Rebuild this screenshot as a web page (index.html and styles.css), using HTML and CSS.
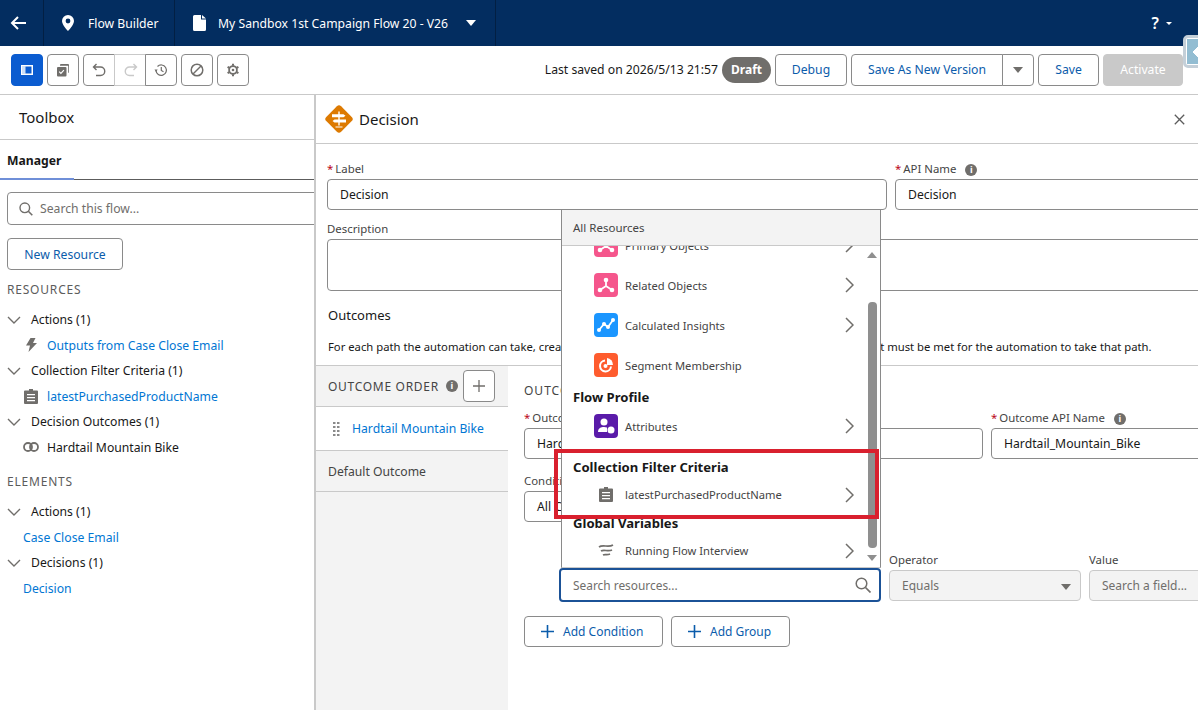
FILE: index.html
```html
<!DOCTYPE html>
<html lang="en">

<head>
    <meta charset="UTF-8">
    <title>Flow Builder</title>
    <link rel="stylesheet" href="styles.css">
</head>

<body>
    <!-- Top navy bar -->
    <header class="topbar">
        <div class="back">
            <svg width="18" height="16" viewBox="0 0 18 16"><path d="M8 2 2 8l6 6M2 8h14" fill="none" stroke="#fff" stroke-width="2"/></svg>
        </div>
        <div class="crumb crumbApp">
            <svg width="12" height="16" viewBox="0 0 12 16"><path fill-rule="evenodd" d="M6 0a6 6 0 0 0-6 6c0 4 6 10 6 10s6-6 6-10a6 6 0 0 0-6-6zm0 3.6a2.4 2.4 0 1 1 0 4.800a2.400 2.400 0 0 1 0-4.800z" fill="#fff"/></svg>
            <span>Flow Builder</span>
        </div>
        <div class="crumb crumbFlow">
            <svg width="13" height="16" viewBox="0 0 13 16"><path d="M1.500 0H8v4.500h5V14.500a1.500 1.500 0 0 1-1.500 1.500h-10A1.500 1.500 0 0 1 0 14.500v-13A1.500 1.500 0 0 1 1.500 0zM9 0l4 3.500H9z" fill="#fff"/></svg>
            <span>My Sandbox 1st Campaign Flow 20 - V26</span>
            <i class="caretWhite"></i>
        </div>
        <div class="help">?<i class="caretSmall"></i></div>
    </header>

    <!-- Toolbar -->
    <div class="toolbar">
        <button class="iconBtn active">
            <svg width="12" height="10" viewBox="0 0 12 10"><rect x=".75" y=".75" width="10.500" height="8.500" fill="none" stroke="#fff" stroke-width="1.500"/><rect x="1" y="1" width="3.500" height="8" fill="#cfe0f7"/></svg>
        </button>
        <button class="iconBtn">
            <svg width="14" height="14" viewBox="0 0 14 14"><path d="M4 1.800A1 1 0 0 1 5 1h7a1 1 0 0 1 1 1v7a1 1 0 0 1-.800 1V2.800H4z" fill="#706e6b"/><rect x="1" y="4" width="9.500" height="9.500" rx="1" fill="#706e6b"/><path d="m3.200 8.700 1.700 1.700 3-3.200" fill="none" stroke="#fff" stroke-width="1.200"/></svg>
        </button>
        <div class="btnGroup">
            <button class="iconBtn">
                <svg width="14" height="14" viewBox="0 0 14 14"><path d="M4.500 1 1.500 4l3 3M1.500 4h7a4 4 0 0 1 0 8.500H4" fill="none" stroke="#706e6b" stroke-width="1.400"/></svg>
            </button>
            <button class="iconBtn off">
                <svg width="14" height="14" viewBox="0 0 14 14"><path d="m9.500 1 3 3-3 3M12.500 4h-7a4 4 0 0 0 0 8.500H10" fill="none" stroke="#c9c9c9" stroke-width="1.400"/></svg>
            </button>
            <button class="iconBtn">
                <svg width="14" height="14" viewBox="0 0 14 14"><path d="M2 7.500a5.200 5.200 0 1 0 1.500-4" fill="none" stroke="#706e6b" stroke-width="1.200"/><path d="M.5 6.500h3.200L2 9z" fill="#706e6b"/><path d="M7.300 4v3.500l2.200 1.300" fill="none" stroke="#706e6b" stroke-width="1.200"/></svg>
            </button>
        </div>
        <button class="iconBtn">
            <svg width="14" height="14" viewBox="0 0 14 14"><circle cx="7" cy="7" r="5.800" fill="none" stroke="#706e6b" stroke-width="1.500"/><path d="M3 11 11 3" stroke="#706e6b" stroke-width="1.500"/></svg>
        </button>
        <button class="iconBtn">
            <svg width="14" height="14" viewBox="0 0 14 14"><circle cx="7" cy="7" r="3.900" fill="none" stroke="#706e6b" stroke-width="1.800"/><circle cx="7" cy="7" r="1.300" fill="#706e6b"/><path d="M7 .8v2M7 11.200v2M1.600 3.900l1.700 1M10.700 9.100l1.700 1M1.600 10.100l1.700-1M10.700 4.900l1.700-1" stroke="#706e6b" stroke-width="2"/></svg>
        </button>

        <div class="toolbarRight">
            <span class="savedText">Last saved on 2026/5/13 21:57</span>
            <span class="draft">Draft</span>
            <button class="btn btnDebug">Debug</button>
            <div class="splitBtn">
                <button class="btn btnVersion">Save As New Version</button>
                <button class="btn btnMore"><i class="caretGrey"></i></button>
            </div>
            <button class="btn btnSave">Save</button>
            <button class="btn btnActivate">Activate</button>
        </div>
    </div>

    <main class="workspace">
        <!-- Toolbox -->
        <aside class="toolbox">
            <h2 class="toolboxTitle">Toolbox</h2>
            <div class="tabs"><span class="tab">Manager</span></div>
            <div class="toolboxBody">
                <div class="searchFlow">
                    <svg width="14" height="14" viewBox="0 0 14 14"><circle cx="5.800" cy="5.800" r="4.800" fill="none" stroke="#706e6b" stroke-width="1.400"/><path d="m9.300 9.300 4 4" stroke="#706e6b" stroke-width="1.600"/></svg>
                    <span>Search this flow...</span>
                </div>
                <button class="btn btnNew">New Resource</button>

                <h3 class="sideHeading">RESOURCES</h3>
                <div class="treeHead"><svg class="chev" viewBox="0 0 14 8"><path d="m1 1 6 6 6-6" fill="none" stroke="#706e6b" stroke-width="1.400"/></svg>Actions (1)</div>
                <div class="treeItem link">
                    <svg width="12" height="14" viewBox="0 0 12 14"><path d="M5.500 0h5L8 5h4L3.500 14 5 7.500H1z" fill="#706e6b"/></svg>
                    <span>Outputs from Case Close Email</span>
                </div>
                <div class="treeHead"><svg class="chev" viewBox="0 0 14 8"><path d="m1 1 6 6 6-6" fill="none" stroke="#706e6b" stroke-width="1.400"/></svg>Collection Filter Criteria (1)</div>
                <div class="treeItem link">
                    <svg width="14" height="15" viewBox="0 0 14 15"><use href="#clipboard"/></svg>
                    <span>latestPurchasedProductName</span>
                </div>
                <div class="treeHead"><svg class="chev" viewBox="0 0 14 8"><path d="m1 1 6 6 6-6" fill="none" stroke="#706e6b" stroke-width="1.400"/></svg>Decision Outcomes (1)</div>
                <div class="treeItem">
                    <svg width="16" height="10" viewBox="0 0 16 10"><circle cx="5" cy="5" r="4" fill="none" stroke="#706e6b" stroke-width="1.800"/><circle cx="11" cy="5" r="4" fill="none" stroke="#706e6b" stroke-width="1.800"/></svg>
                    <span>Hardtail Mountain Bike</span>
                </div>

                <h3 class="sideHeading headingElements">ELEMENTS</h3>
                <div class="treeHead"><svg class="chev" viewBox="0 0 14 8"><path d="m1 1 6 6 6-6" fill="none" stroke="#706e6b" stroke-width="1.400"/></svg>Actions (1)</div>
                <div class="treeItem link plain">Case Close Email</div>
                <div class="treeHead"><svg class="chev" viewBox="0 0 14 8"><path d="m1 1 6 6 6-6" fill="none" stroke="#706e6b" stroke-width="1.400"/></svg>Decisions (1)</div>
                <div class="treeItem link plain">Decision</div>
            </div>
        </aside>

        <!-- Decision editor -->
        <section class="editor">
            <div class="editorHead">
                <svg width="30" height="30" viewBox="0 0 30 30"><rect x="4.500" y="4.500" width="21" height="21" rx="3" transform="rotate(45 15 15)" fill="#dd7a01"/><path d="M14.300 7.500h1.400v14h-1.400z" fill="#fff"/><path d="M8 10.200h11.500l2 1.500-2 1.500H8zM22 15.500H10.500l-2 1.500 2 1.500H22zM11.500 22.500h7V23.500h-7z" fill="#fff"/></svg>
                <h1>Decision</h1>
                <svg class="closeX" width="11" height="11" viewBox="0 0 11 11"><path d="m.8.800 9.400 9.400M10.200.8.800 10.200" stroke="#5c5c5c" stroke-width="1.300"/></svg>
            </div>

            <div class="nameRow">
                <div class="field">
                    <label><b>*</b>Label</label>
                    <div class="input">Decision</div>
                </div>
                <div class="field">
                    <label><b>*</b>API Name<i class="info">i</i></label>
                    <div class="input">Decision</div>
                </div>
            </div>
            <div class="field descField">
                <label>Description</label>
                <div class="input textarea"></div>
            </div>

            <h2 class="outcomesTitle">Outcomes</h2>
            <p class="outcomesHelp">For each path the automation can take, create an outcome. For each outcome, specify the conditions that must be met for the automation to take that path.</p>

            <div class="outcomes">
                <div class="outcomeList">
                    <div class="orderHead">
                        <span>OUTCOME ORDER</span><i class="info">i</i>
                        <button class="addOutcome"><svg width="14" height="14" viewBox="0 0 14 14"><path d="M7 1v12M1 7h12" stroke="#706e6b" stroke-width="1.300"/></svg></button>
                    </div>
                    <div class="orderItem current">
                        <svg width="7" height="14" viewBox="0 0 7 14" fill="#8a8a8a"><rect width="2.500" height="2"/><rect x="4" width="2.500" height="2"/><rect y="4" width="2.500" height="2"/><rect x="4" y="4" width="2.500" height="2"/><rect y="8" width="2.500" height="2"/><rect x="4" y="8" width="2.500" height="2"/><rect y="12" width="2.500" height="2"/><rect x="4" y="12" width="2.500" height="2"/></svg>
                        Hardtail Mountain Bike
                    </div>
                    <div class="orderItem">Default Outcome</div>
                </div>

                <div class="outcomeDetail">
                    <h3 class="detailTitle">OUTCOME DETAILS</h3>
                    <div class="detailRow">
                        <div class="field">
                            <label><b>*</b>Outcome Label</label>
                            <div class="input">Hardtail Mountain Bike</div>
                        </div>
                        <div class="field">
                            <label><b>*</b>Outcome API Name<i class="info">i</i></label>
                            <div class="input">Hardtail_Mountain_Bike</div>
                        </div>
                    </div>
                    <div class="field condField">
                        <label>Condition Requirements to Execute Outcome</label>
                        <div class="input">All Conditions Are Met (AND)</div>
                    </div>
                    <div class="condRow">
                        <div class="field">
                            <label></label>
                            <div class="input searchRes">
                                <span>Search resources...</span>
                                <svg width="16" height="16" viewBox="0 0 16 16"><circle cx="6.500" cy="6.500" r="5.300" fill="none" stroke="#706e6b" stroke-width="1.500"/><path d="m10.500 10.500 5 5" stroke="#706e6b" stroke-width="1.700"/></svg>
                            </div>
                        </div>
                        <div class="field">
                            <label>Operator</label>
                            <div class="input disabled">Equals<i class="caretGrey"></i></div>
                        </div>
                        <div class="field">
                            <label>Value</label>
                            <div class="input disabled">Search a field...</div>
                        </div>
                    </div>
                    <div class="addRow">
                        <button class="btn btnAdd btnCondition"><svg width="13" height="13" viewBox="0 0 13 13"><path d="M6.500 0v13M0 6.500h13" stroke="#0b5cab" stroke-width="1.600"/></svg>Add Condition</button>
                        <button class="btn btnAdd btnGroupAdd"><svg width="13" height="13" viewBox="0 0 13 13"><path d="M6.500 0v13M0 6.500h13" stroke="#0b5cab" stroke-width="1.600"/></svg>Add Group</button>
                    </div>
                </div>
            </div>
        </section>
    </main>

    <!-- Resource picker, open over the form -->
    <div class="picker">
        <div class="pickerHead">All Resources</div>
        <div class="pickerBody">
            <div class="pickerList">
                <div class="pickRow">
                    <span class="tile pink"><svg viewBox="0 0 24 24"><use href="#objects"/></svg></span>Primary Objects<svg class="arrow" viewBox="0 0 9 16"><use href="#arrow"/></svg>
                </div>
                <div class="pickRow">
                    <span class="tile pink"><svg viewBox="0 0 24 24"><use href="#objects"/></svg></span>Related Objects<svg class="arrow" viewBox="0 0 9 16"><use href="#arrow"/></svg>
                </div>
                <div class="pickRow">
                    <span class="tile blue"><svg viewBox="0 0 24 24"><path d="M5 17l5-6 4 3 5-7" fill="none" stroke="#fff" stroke-width="1.800"/><circle cx="5" cy="17" r="2" fill="#fff"/><circle cx="10" cy="11" r="2" fill="#fff"/><circle cx="14" cy="14" r="2" fill="#fff"/><circle cx="19" cy="7" r="2" fill="#fff"/></svg></span>Calculated Insights<svg class="arrow" viewBox="0 0 9 16"><use href="#arrow"/></svg>
                </div>
                <div class="pickRow">
                    <span class="tile orange"><svg viewBox="0 0 24 24"><path d="M11 7.500a5.500 5.500 0 1 0 6 6" fill="none" stroke="#fff" stroke-width="2"/><path d="M13 5a7 7 0 0 1 6 7h-6z" fill="#fff"/><circle cx="11.500" cy="13" r="2" fill="#fff"/></svg></span>Segment Membership
                </div>
                <h4 class="pickGroup groupProfile">Flow Profile</h4>
                <div class="pickRow">
                    <span class="tile purple"><svg viewBox="0 0 24 24"><circle cx="10" cy="8" r="3.500" fill="#fff"/><path d="M4 18c0-4 3-5 6-5 1 0 2 .2 3 .6V18z" fill="#fff"/><circle cx="17" cy="16" r="3.500" fill="#fff"/></svg></span>Attributes<svg class="arrow" viewBox="0 0 9 16"><use href="#arrow"/></svg>
                </div>
                <h4 class="pickGroup groupFilter">Collection Filter Criteria</h4>
                <div class="pickRow tight">
                    <span class="tile bare"><svg width="14" height="15" viewBox="0 0 14 15"><use href="#clipboard"/></svg></span>latestPurchasedProductName<svg class="arrow" viewBox="0 0 9 16"><use href="#arrow"/></svg>
                </div>
                <h4 class="pickGroup groupGlobal">Global Variables</h4>
                <div class="pickRow tight">
                    <span class="tile bare"><svg width="16" height="14" viewBox="0 0 16 14"><path d="M1 3c4-3 9 1 14-2M3 7c3-2 7 1 11-1M5 11c2-1 4 .5 7-1" fill="none" stroke="#706e6b" stroke-width="1.700"/></svg></span>Running Flow Interview<svg class="arrow" viewBox="0 0 9 16"><use href="#arrow"/></svg>
                </div>
            </div>
            <div class="scrollbar">
                <i class="scrollUp"></i>
                <i class="scrollThumb"></i>
                <i class="scrollDown"></i>
            </div>
        </div>
    </div>

    <!-- Annotation and side handle on top of the capture -->
    <div class="redBox"></div>
    <div class="sideHandle"><i></i></div>

    <svg class="defs" width="0" height="0">
        <defs>
            <g id="clipboard">
                <path fill-rule="evenodd" d="M5 0h4v1.500H13a1 1 0 0 1 1 1V14a1 1 0 0 1-1 1H1a1 1 0 0 1-1-1V2.500a1 1 0 0 1 1-1h4zM3 5v1.300h8V5zm0 3v1.300h8V8zm0 3v1.300h8V11z" fill="#706e6b"/>
            </g>
            <g id="objects">
                <circle cx="12" cy="7" r="2.300" fill="#fff"/>
                <circle cx="6" cy="17" r="2.300" fill="#fff"/>
                <circle cx="18" cy="17" r="2.300" fill="#fff"/>
                <path d="M12 7v6l-6 4m6-4 6 4" fill="none" stroke="#fff" stroke-width="1.800"/>
            </g>
            <path id="arrow" d="m1 1 7 7-7 7" fill="none" stroke="#706e6b" stroke-width="1.500"/>
        </defs>
    </svg>
</body>

</html>
```

FILE: styles.css
```css
* {
    margin: 0;
    padding: 0;
    box-sizing: border-box;
}

html,
body {
    height: 100%;
    overflow: hidden;
}

body {
    position: relative;
    display: flex;
    flex-direction: column;
    background-color: #fff;
    color: #181818;
    font-family: "Noto Sans", "Open Sans", sans-serif;
    font-size: 12.2px;
}

button {
    font: inherit;
    background-color: #fff;
}

i {
    font-style: normal;
}

/* top bar */
.topbar {
    display: flex;
    align-items: center;
    flex: none;
    height: 46px;
    background-color: #032d60;
    color: #fff;
    font-size: 12.2px;
}

.back {
    display: flex;
    align-items: center;
    height: 100%;
    width: 44px;
    padding-left: 10px;
    border-right: 1px solid #021f43;
}

.crumb {
    display: flex;
    align-items: center;
    height: 100%;
    border-right: 1px solid #021f43;
}

.crumbApp {
    width: 131px;
    padding-left: 18px;
    gap: 14px;
}

.crumbFlow {
    width: 321px;
    padding-left: 18px;
    gap: 12px;
}

.caretWhite {
    width: 0;
    height: 0;
    margin-left: 6px;
    border: 5.5px solid transparent;
    border-top: 6px solid #fff;
    border-bottom: 0;
}

.help {
    display: flex;
    align-items: center;
    margin-left: auto;
    margin-right: 26px;
    font-size: 16px;
    font-weight: 600;
}

.caretSmall {
    width: 0;
    height: 0;
    margin-left: 7px;
    border: 3px solid transparent;
    border-top: 3px solid #fff;
    border-bottom: 0;
}

/* toolbar */
.toolbar {
    display: flex;
    align-items: center;
    flex: none;
    height: 49px;
    padding: 0 15px 1px 11px;
    gap: 4px;
    border-bottom: 1px solid #c9c9c9;
}

.iconBtn {
    display: flex;
    align-items: center;
    justify-content: center;
    width: 32px;
    height: 32px;
    border: 1px solid #8a8a8a;
    border-radius: 4px;
}

.iconBtn.active {
    background-color: #0b5cd0;
    border-color: #0b5cd0;
}

.btnGroup {
    display: flex;
}

.btnGroup .iconBtn {
    border-radius: 0;
    margin-left: -1px;
}

.btnGroup .iconBtn:first-child {
    margin-left: 0;
    border-radius: 4px 0 0 4px;
}

.btnGroup .iconBtn:last-child {
    border-radius: 0 4px 4px 0;
}

.btnGroup .iconBtn.off {
    border-top-color: #c9c9c9;
    border-bottom-color: #c9c9c9;
    border-left-color: #c9c9c9;
    border-right: 0;
}

.toolbarRight {
    display: flex;
    align-items: center;
    margin-left: auto;
    gap: 4px;
}

.draft {
    padding: 0 9px;
    height: 26px;
    line-height: 25px;
    background-color: #706e6b;
    border-radius: 13px;
    color: #fff;
    font-size: 12px;
    font-weight: 700;
}

.btn {
    height: 32px;
    border: 1px solid #8a8a8a;
    border-radius: 4px;
    color: #0b5cab;
    font-size: 12.2px;
}

.btnDebug {
    width: 72px;
}

.splitBtn {
    display: flex;
}

.btnVersion {
    width: 152px;
    border-radius: 4px 0 0 4px;
}

.btnMore {
    display: flex;
    align-items: center;
    justify-content: center;
    width: 32px;
    margin-left: -1px;
    border-radius: 0 4px 4px 0;
}

.caretGrey {
    width: 0;
    height: 0;
    border: 5px solid transparent;
    border-top: 6px solid #706e6b;
    border-bottom: 0;
}

.btnSave {
    width: 61px;
}

.btnActivate {
    width: 80px;
    background-color: #c9c9c9;
    border-color: #c9c9c9;
    color: #fff;
}

/* main area */
.workspace {
    display: flex;
    flex: 1;
    min-height: 0;
}

.toolbox {
    flex: none;
    width: 314px;
    overflow: hidden;
}

.toolboxTitle {
    height: 45px;
    padding: 12px 0 0 19px;
    border-bottom: 1px solid #c9c9c9;
    font-size: 15px;
    font-weight: 400;
}

.tabs {
    height: 40px;
    border-bottom: 1px solid #5c5c5c;
}

.tab {
    display: inline-block;
    width: 74px;
    height: 40px;
    padding: 12px 0 0 7px;
    border-bottom: 2px solid #6f8fd8;
    font-size: 12.2px;
    font-weight: 700;
}

.toolboxBody {
    padding: 12px 0 0 7px;
}

.searchFlow {
    display: flex;
    align-items: center;
    gap: 7px;
    width: 320px;
    height: 33px;
    padding-left: 11px;
    border: 1px solid #8a8a8a;
    border-radius: 4px;
    color: #706e6b;
}

.btnNew {
    display: block;
    width: 116px;
    margin-top: 13px;
}

.sideHeading {
    margin-top: 10px;
    height: 20px;
    line-height: 20px;
    color: #5c5c5c;
    font-size: 12px;
    font-weight: 400;
    letter-spacing: .8px;
}

.headingElements {
    margin-top: 12px;
}

.treeHead {
    display: flex;
    align-items: center;
    height: 25.5px;
    gap: 10px;
}

.sideHeading + .treeHead {
    margin-top: 7px;
}

.chev {
    width: 14px;
    height: 8px;
}

.treeItem {
    display: grid;
    grid-template-columns: 16px auto;
    align-items: center;
    height: 25.5px;
    gap: 8px;
    padding-left: 16px;
}

.treeItem svg {
    justify-self: center;
}

.treeItem.plain {
    display: flex;
}

.link {
    color: #0176d3;
}

/* decision editor */
.editor {
    flex: 1;
    min-width: 0;
    border-left: 2px solid #c9c9c9;
    overflow: hidden;
}

.editorHead {
    display: flex;
    align-items: center;
    height: 49px;
    padding: 0 13px 0 8px;
    gap: 5px;
    border-bottom: 1px solid #c9c9c9;
}

.editorHead h1 {
    font-size: 15px;
    font-weight: 400;
}

.closeX {
    margin-left: auto;
}

label {
    display: block;
    height: 20px;
    line-height: 20px;
    color: #444;
    font-size: 11.4px;
    white-space: nowrap;
}

label b {
    margin-right: 2px;
    color: #ba0517;
    font-weight: 400;
}

.input {
    height: 31px;
    line-height: 29px;
    padding-left: 12px;
    border: 1px solid #8a8a8a;
    border-radius: 4px;
    font-size: 12.2px;
    white-space: nowrap;
    overflow: hidden;
}

.nameRow {
    display: grid;
    grid-template-columns: 560px 320px;
    gap: 8px;
    padding: 15px 0 0 11px;
}

.descField {
    width: 890px;
    padding: 9px 0 0 11px;
}

.textarea {
    height: 52px;
}

.info {
    display: inline-block;
    width: 12px;
    height: 12px;
    margin-left: 9px;
    border-radius: 50%;
    background-color: #706e6b;
    color: #fff;
    font-size: 9px;
    font-weight: 700;
    line-height: 12px;
    text-align: center;
}

.outcomesTitle {
    height: 22px;
    margin: 13px 0 0 12px;
    font-size: 13px;
    font-weight: 400;
    line-height: 22px;
}

.outcomesHelp {
    height: 20px;
    margin: 11px 0 0 12px;
    font-size: 11.27px;
    line-height: 20px;
    white-space: nowrap;
}

.outcomes {
    display: flex;
    height: 345px;
    margin-top: 8px;
    border-top: 1px solid #c9c9c9;
}

.outcomeList {
    flex: none;
    width: 192px;
    background-color: #f3f3f3;
}

.orderHead {
    display: flex;
    align-items: center;
    height: 41px;
    padding-left: 12px;
    border-bottom: 1px solid #c9c9c9;
    color: #444;
    letter-spacing: .7px;
    font-size: 12px;
}

.orderHead .info {
    margin-left: 7px;
    letter-spacing: 0;
}

.addOutcome {
    display: flex;
    align-items: center;
    justify-content: center;
    width: 32px;
    height: 32px;
    margin-left: 5px;
    border: 1px solid #8a8a8a;
    border-radius: 4px;
}

.orderItem {
    display: flex;
    align-items: center;
    height: 41px;
    padding-left: 12px;
    gap: 12px;
    border-bottom: 1px solid #c9c9c9;
    color: #444;
}

.orderItem.current {
    height: 44px;
    padding-left: 17px;
    background-color: #fff;
    color: #0176d3;
}

.outcomeDetail {
    flex: 1;
    min-width: 0;
    padding: 16px 0 0 16px;
}

.detailTitle {
    height: 20px;
    color: #444;
    font-size: 12px;
    font-weight: 400;
    letter-spacing: 1px;
    white-space: nowrap;
}

.detailRow {
    display: grid;
    grid-template-columns: 459px 300px;
    gap: 8px;
    margin-top: 6px;
}

.condField {
    width: 150px;
    margin-top: 12px;
}

.condRow {
    display: grid;
    grid-template-columns: 322px 192px 200px;
    gap: 8px;
    margin-top: 28px;
    padding-left: 35px;
}

.searchRes {
    display: flex;
    align-items: center;
    justify-content: space-between;
    height: 34px;
    margin-top: -2px;
    padding-right: 8px;
    border: 2px solid #1b5297;
    color: #706e6b;
    font-size: 11.9px;
}

.disabled {
    position: relative;
    background-color: #f3f3f3;
    border-color: #c9c9c9;
    color: #706e6b;
    font-size: 12px;
}

.disabled .caretGrey {
    position: absolute;
    top: 13px;
    right: 9px;
}

.addRow {
    display: flex;
    gap: 8px;
    margin-top: 14px;
}

.btnAdd {
    display: flex;
    align-items: center;
    height: 31px;
    gap: 9px;
    padding-left: 16px;
    font-size: 12px;
}

.btnCondition {
    width: 139px;
}

.btnGroupAdd {
    width: 119px;
}

/* resource picker */
.picker {
    position: absolute;
    top: 209px;
    left: 561px;
    width: 320px;
    height: 359px;
    background-color: #fff;
    border: 1px solid #8a8a8a;
    border-bottom-color: #c9c9c9;
    overflow: hidden;
}

.pickerHead {
    height: 36px;
    padding-left: 11px;
    line-height: 36px;
    background-color: #f3f3f3;
    border-bottom: 1px solid #c9c9c9;
    color: #444;
    font-size: 11.5px;
}

.pickerBody {
    position: relative;
    height: 321px;
    overflow: hidden;
}

.pickerList {
    margin-top: -21px;
}

.pickRow {
    position: relative;
    display: flex;
    align-items: center;
    height: 40px;
    gap: 7px;
    padding-left: 32px;
    color: #444;
    font-size: 11.2px;
}

.pickRow.tight {
    height: 37px;
}

.tile {
    display: flex;
    align-items: center;
    justify-content: center;
    flex: none;
    width: 24px;
    height: 24px;
    border-radius: 4px;
}

.pink {
    background-color: #f5568c;
}

.blue {
    background-color: #1b96ff;
}

.orange {
    background-color: #fe5c2e;
}

.purple {
    background-color: #5a1ba9;
}

.bare {
    background-color: transparent;
}

.arrow {
    position: absolute;
    top: 50%;
    right: 26px;
    width: 9px;
    height: 16px;
    margin-top: -8px;
}

.pickGroup {
    padding-left: 11px;
    color: #181818;
    font-size: 13.1px;
    font-weight: 700;
    line-height: 18px;
}

.groupProfile {
    margin-top: 3px;
}

.groupFilter {
    margin-top: 12px;
}

.groupGlobal {
    margin-top: 1px;
}

.scrollbar i {
    position: absolute;
    display: block;
}

.scrollUp,
.scrollDown {
    right: 3px;
    width: 0;
    height: 0;
    border: 5px solid transparent;
}

.scrollUp {
    top: 6px;
    border-top: 0;
    border-bottom: 6px solid #8f8f8f;
}

.scrollDown {
    bottom: 6px;
    border-bottom: 0;
    border-top: 6px solid #8f8f8f;
}

.scrollThumb {
    top: 56px;
    right: 3px;
    width: 9px;
    height: 246px;
    border-radius: 4px;
    background-color: #8f8f8f;
}

.redBox {
    position: absolute;
    top: 449px;
    left: 554px;
    width: 325px;
    height: 70px;
    border: 4px solid #d9202e;
}

.sideHandle {
    position: absolute;
    top: 35px;
    left: 1183px;
    width: 20px;
    height: 33px;
    padding: 1px;
    background-color: #fff;
    border: 3px solid #c4cfd8;
    border-radius: 5px;
    overflow: hidden;
}

.sideHandle i {
    display: block;
    width: 100%;
    height: 100%;
    background-color: #93bdd2;
    background-image: linear-gradient(135deg, transparent 50%, #fff 50%), linear-gradient(45deg, transparent 50%, #fff 50%);
    background-repeat: no-repeat;
    background-position: 5px 6px, 5px 13px;
    background-size: 8px 7px;
}

.defs {
    position: absolute;
}
```
